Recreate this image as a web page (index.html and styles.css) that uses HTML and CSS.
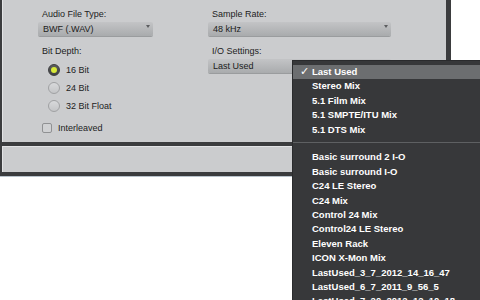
FILE: index.html
```html
<!DOCTYPE html>
<html lang="en">
<head>
    <meta charset="UTF-8">
    <title>Bounce Settings</title>
    <link rel="stylesheet" href="styles.css">
</head>
<body>
    <div class="window">
        <div class="panel settings">
            <div class="col col-left">
                <div class="caption">Audio File Type:</div>
                <div class="select select-short">BWF (.WAV)<span class="arrow"></span></div>

                <div class="caption caption-gap">Bit Depth:</div>
                <div class="radios">
                    <div class="radio-row"><span class="radio checked"></span>16 Bit</div>
                    <div class="radio-row"><span class="radio"></span>24 Bit</div>
                    <div class="radio-row"><span class="radio"></span>32 Bit Float</div>
                </div>

                <div class="check-row"><span class="checkbox"></span>Interleaved</div>
            </div>
            <div class="col col-right">
                <div class="caption">Sample Rate:</div>
                <div class="select select-long">48 kHz<span class="arrow"></span></div>

                <div class="caption caption-gap">I/O Settings:</div>
                <div class="select select-long">Last Used<span class="arrow"></span></div>
            </div>
        </div>
        <div class="panel footer"></div>
    </div>

    <div class="menu">
        <div class="menu-item active"><span class="tick">✓</span>Last Used</div>
        <div class="menu-item">Stereo Mix</div>
        <div class="menu-item">5.1 Film Mix</div>
        <div class="menu-item">5.1 SMPTE/ITU Mix</div>
        <div class="menu-item">5.1 DTS Mix</div>
        <div class="menu-sep"></div>
        <div class="menu-item">Basic surround 2 I-O</div>
        <div class="menu-item">Basic surround I-O</div>
        <div class="menu-item">C24 LE Stereo</div>
        <div class="menu-item">C24 Mix</div>
        <div class="menu-item">Control 24 Mix</div>
        <div class="menu-item">Control24 LE Stereo</div>
        <div class="menu-item">Eleven Rack</div>
        <div class="menu-item">ICON X-Mon Mix</div>
        <div class="menu-item">LastUsed_3_7_2012_14_16_47</div>
        <div class="menu-item">LastUsed_6_7_2011_9_56_5</div>
        <div class="menu-item">LastUsed_7_20_2012_12_10_18</div>
    </div>
</body>
</html>
```

FILE: styles.css
```css
body {
    margin: 0;
    width: 480px;
    height: 300px;
    overflow: hidden;
    position: relative;
    background-color: #fff;
    font-family: "Liberation Sans", Arial, sans-serif;
    font-size: 9px;
    color: #222;
}
.window {
    width: 451px;
    background-color: #3b3c3e;
    padding: 0 5px 4px 2px;
    box-sizing: border-box;
    border-bottom: 1px solid #b9c3cc;
}
.panel {
    background-color: #cbccce;
    border-left: 1px solid #e2e3e5;
    box-sizing: border-box;
}
.settings {
    height: 142px;
    display: flex;
    padding: 9px 0 0 35px;
}
.footer {
    height: 26px;
    margin-top: 4px;
    border-top: 1px solid #e2e3e5;
}
.col-left {
    width: 170px;
}
.caption {
    line-height: 11px;
    padding-left: 4px;
    margin-bottom: 2px;
}
.caption-gap {
    margin-top: 10px;
}
.select {
    position: relative;
    height: 14px;
    line-height: 14px;
    padding-left: 5px;
    box-sizing: border-box;
    border-radius: 2px;
    background: linear-gradient(#c3c4c6, #a9abad);
    box-shadow: 0 1px 0 #9a9c9e;
    color: #1c1c1c;
}
.select-short {
    width: 115px;
}
.select-long {
    width: 183px;
}
.arrow {
    position: absolute;
    top: 3px;
    right: 3px;
    border-left: 2.5px solid transparent;
    border-right: 2.5px solid transparent;
    border-top: 3px solid #5c5d5f;
}
.radios {
    margin-top: 4px;
    padding-left: 10px;
}
.radio-row {
    display: flex;
    align-items: center;
    height: 18px;
}
.radio {
    width: 12px;
    height: 12px;
    border-radius: 50%;
    box-sizing: border-box;
    border: 1px solid #a0a1a3;
    background: linear-gradient(#d8d9db, #c4c5c7);
    margin-right: 6px;
    display: flex;
    align-items: center;
    justify-content: center;
}
.radio.checked {
    border-color: #3e3f41;
    background: linear-gradient(#5d5e60, #3f4042);
}
.radio.checked::after {
    content: "";
    width: 6px;
    height: 6px;
    border-radius: 50%;
    background-color: #d8ea3a;
}
.check-row {
    display: flex;
    align-items: center;
    margin-top: 7px;
    height: 11px;
    padding-left: 4px;
}
.checkbox {
    width: 10px;
    height: 10px;
    box-sizing: border-box;
    border: 1px solid #909193;
    border-radius: 2px;
    background-color: #d0d1d3;
    margin-right: 6px;
}

/* popup menu over the I/O Settings field */
.menu {
    position: absolute;
    left: 292px;
    top: 60px;
    width: 200px;
    height: 240px;
    padding-top: 4px;
    background-color: #37383a;
    border-left: 1px solid #2a2b2d;
    border-top: 1px solid #2a2b2d;
    box-sizing: border-box;
    font-weight: bold;
    font-size: 9.5px;
    color: #fff;
}
.menu-item {
    height: 14.4px;
    line-height: 14.4px;
    padding-left: 19px;
    position: relative;
    white-space: nowrap;
}
.menu-item.active {
    background-color: #6c6e70;
}
.tick {
    position: absolute;
    left: 7px;
    font-family: "DejaVu Sans", sans-serif;
    font-size: 11px;
    font-weight: bold;
}
.menu-sep {
    height: 1px;
    margin: 5px 0 7.5px;
    background-color: #5e6062;
}
```
